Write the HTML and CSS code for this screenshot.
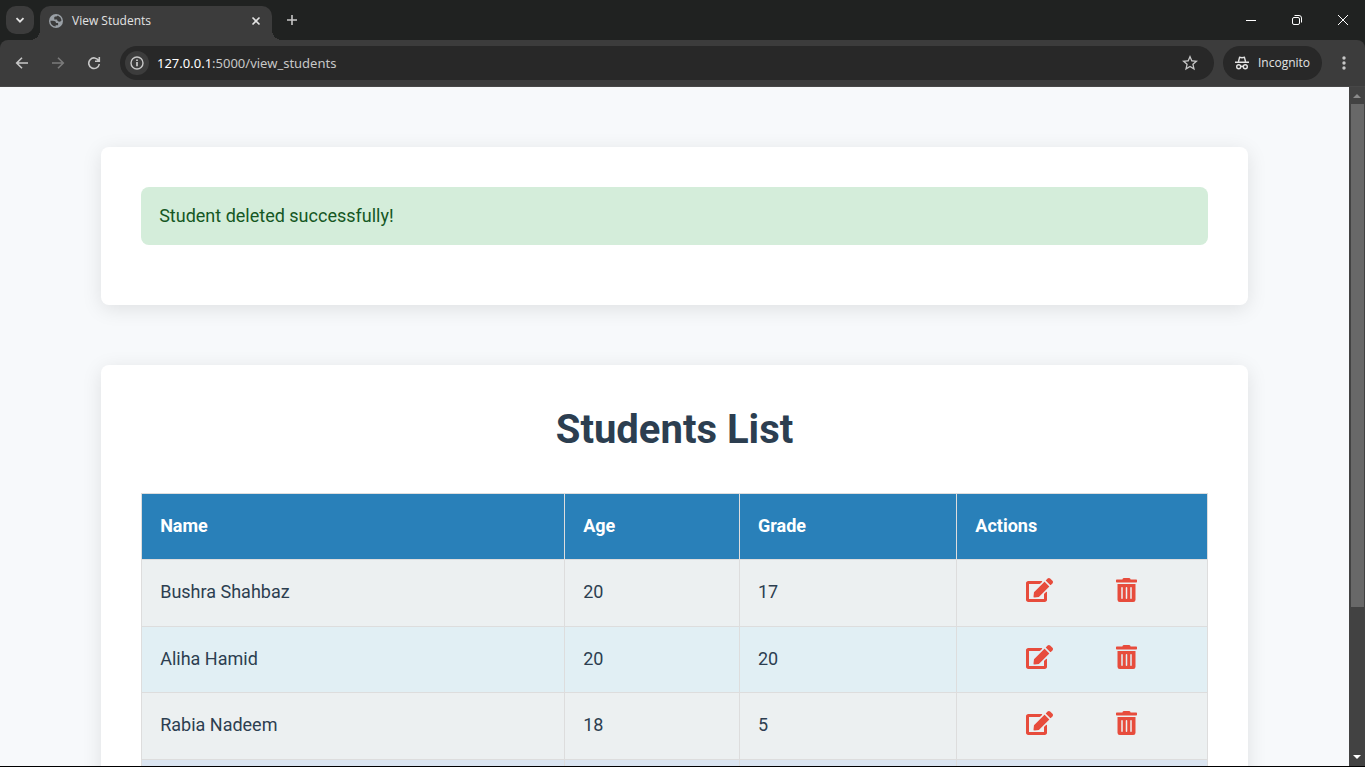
FILE: index.html
```html
<!DOCTYPE html>
<html lang="en">
<head>
<meta charset="utf-8">
<title>View Students</title>
<link rel="stylesheet" href="styles.css">
</head>
<body>
<svg class="defs" aria-hidden="true">
  <symbol id="edit" viewBox="0 0 576 512"><path d="M402.6 83.2l90.2 90.2c3.8 3.8 3.8 10 0 13.8L274.4 405.6l-92.8 10.3c-12.4 1.4-22.9-9.1-21.5-21.5l10.3-92.8L388.8 83.2c3.8-3.8 10-3.8 13.8 0zm162-22.9l-48.8-48.8c-15.2-15.2-39.9-15.2-55.2 0l-35.4 35.4c-3.8 3.8-3.8 10 0 13.8l90.2 90.2c3.8 3.8 10 3.8 13.8 0l35.4-35.4c15.2-15.3 15.2-40 0-55.2zM384 346.2V448H64V128h229.8c3.2 0 6.2-1.3 8.5-3.5l40-40c7.6-7.6 2.2-20.5-8.5-20.5H48C21.5 64 0 85.5 0 112v352c0 26.5 21.5 48 48 48h352c26.5 0 48-21.5 48-48V306.2c0-10.7-12.9-16-20.5-8.5l-40 40c-2.2 2.3-3.5 5.3-3.5 8.5z"/></symbol>
  <symbol id="trash" viewBox="0 0 448 512"><path d="M32 464a48 48 0 0 0 48 48h288a48 48 0 0 0 48-48V128H32zm272-256a16 16 0 0 1 32 0v224a16 16 0 0 1-32 0zm-96 0a16 16 0 0 1 32 0v224a16 16 0 0 1-32 0zm-96 0a16 16 0 0 1 32 0v224a16 16 0 0 1-32 0zM432 32H312l-9.4-18.7A24 24 0 0 0 281.1 0H166.800a23.720 23.720 0 0 0-21.400 13.300L136 32H16A16 16 0 0 0 0 48v32a16 16 0 0 0 16 16h416a16 16 0 0 0 16-16V48a16 16 0 0 0-16-16z"/></symbol>
</svg>
<div class="browser">
  <div class="tabstrip">
    <button class="tab-search" aria-label="Search tabs"><svg width="10" height="10" viewBox="0 0 10 10"><path class="line bright" d="M1.5 3.2L5 6.7l3.500-3.500" stroke-width="1.8"/></svg></button>
    <div class="tab">
      <svg class="favicon" width="14" height="14" viewBox="2 2 20 20"><circle cx="12" cy="12" r="10" fill="#9aa0a6"/><path fill="#3c3c3c" d="M4 11.500h3.500c2.800 0 4.500 1 4.500 3.500h3v3h-3.500v1.900A8 8 0 0 1 4 11.500zM15 4.600A8 8 0 0 1 19.900 11c-.5 1.200-1.500 2-2.900 2-2 0-3.500-1.300-3.500-3H9.500V7c0-.9 1-1.500 2.500-1.500h1c0-1 .8-1.500 2-.9z"/></svg>
      <span class="tab-title">View Students</span>
      <button class="tab-close" aria-label="Close tab"><svg width="10" height="10" viewBox="0 0 10 10"><path class="line bright" d="M1.500 1.500l7 7M8.500 1.500l-7 7" stroke-width="1.600"/></svg></button>
    </div>
    <button class="tab-new" aria-label="New tab"><svg width="12" height="12" viewBox="0 0 12 12"><path class="line" d="M6 1v10M1 6h10" stroke-width="1.600"/></svg></button>
    <div class="window-buttons">
      <button aria-label="Minimize"><svg width="10" height="10" viewBox="0 0 10 10"><path d="M0 5h10v1H0z" fill="#fff"/></svg></button>
      <button aria-label="Restore"><svg width="10" height="10" viewBox="0 0 10 10"><rect class="win" x=".5" y="2.500" width="7" height="7" rx="1.500"/><path class="win" d="M2.500 .5H7A2.500 2.500 0 0 1 9.500 3v4.500"/></svg></button>
      <button aria-label="Close"><svg width="10" height="10" viewBox="0 0 10 10"><path class="win" d="M0 0l10 10M10 0L0 10"/></svg></button>
    </div>
  </div>
  <div class="toolbar">
    <button class="nav" aria-label="Back"><svg width="14" height="14" viewBox="0 0 14 14"><path class="line" d="M13 7H2M7 1.700L1.700 7 7 12.300" stroke-width="1.600"/></svg></button>
    <button class="nav dim" aria-label="Forward" disabled><svg width="14" height="14" viewBox="0 0 14 14"><path class="line" d="M1 7h11M7 1.700L12.300 7 7 12.300" stroke-width="1.600"/></svg></button>
    <button class="nav" aria-label="Reload"><svg width="14" height="14" viewBox="0 0 14 14"><path class="line" d="M11.600 4.500A5.300 5.300 0 1 0 12.300 8M12.300 1v4.300H8" stroke-width="1.600"/></svg></button>
    <div class="omnibox">
      <button class="info" aria-label="View site information"><svg width="14" height="14" viewBox="0 0 14 14"><circle class="line" cx="7" cy="7" r="6" stroke-width="1.400"/><path d="M6.200 6h1.600v4.300H6.200zM6.200 3.500h1.600v1.600H6.200z" fill="#d5d5d5"/></svg></button>
      <div class="url" role="textbox" aria-label="Address"><span class="host">127.0.0.1</span>:5000/view_students</div>
      <button class="star" aria-label="Bookmark this tab"><svg width="16" height="16" viewBox="2 2 20 20"><path fill="#c7c7c7" d="M22 9.240l-7.190-.62L12 2 9.190 8.630 2 9.240l5.460 4.730L5.820 21 12 17.270 18.180 21l-1.630-7.030L22 9.240zM12 15.400l-3.760 2.270 1-4.280-3.320-2.880 4.380-.38L12 6.100l1.710 4.040 4.380.38-3.320 2.880 1 4.280L12 15.400z"/></svg></button>
    </div>
    <button class="incognito"><svg width="14" height="14" viewBox="0 0 14 14"><path class="line bright" d="M3.500 5.500L4.600 1.200 7 1.700l2.400-.5 1.100 4.300M0 6.300h14M5.700 10.700q1.300-.9 2.600 0" stroke-width="1.400"/><circle class="line bright" cx="3.700" cy="10.800" r="2" stroke-width="1.400"/><circle class="line bright" cx="10.300" cy="10.800" r="2" stroke-width="1.400"/></svg>Incognito</button>
    <button class="menu" aria-label="Menu"><svg width="4" height="14" viewBox="0 0 4 14"><g fill="#c7c7c7"><circle cx="2" cy="2" r="1.700"/><circle cx="2" cy="7" r="1.700"/><circle cx="2" cy="12" r="1.700"/></g></svg></button>
  </div>
  <div class="viewport">
    <main class="page">
      <section class="card">
        <div class="alert" role="status">Student deleted successfully!</div>
      </section>
      <section class="card">
        <h1>Students List</h1>
        <table>
          <colgroup><col class="c-name"><col class="c-age"><col class="c-grade"><col class="c-actions"></colgroup>
          <thead><tr><th>Name</th><th>Age</th><th>Grade</th><th>Actions</th></tr></thead>
          <tbody>
            <tr><td>Bushra Shahbaz</td><td>20</td><td>17</td><td><div class="actions"><a href="#" aria-label="Edit"><svg width="27" height="24"><use href="#edit"/></svg></a><a href="#" aria-label="Delete"><svg width="21" height="24"><use href="#trash"/></svg></a></div></td></tr>
            <tr class="even"><td>Aliha Hamid</td><td>20</td><td>20</td><td><div class="actions"><a href="#" aria-label="Edit"><svg width="27" height="24"><use href="#edit"/></svg></a><a href="#" aria-label="Delete"><svg width="21" height="24"><use href="#trash"/></svg></a></div></td></tr>
            <tr><td>Rabia Nadeem</td><td>18</td><td>5</td><td><div class="actions"><a href="#" aria-label="Edit"><svg width="27" height="24"><use href="#edit"/></svg></a><a href="#" aria-label="Delete"><svg width="21" height="24"><use href="#trash"/></svg></a></div></td></tr>
            <tr class="hovered"><td></td><td></td><td></td><td></td></tr>
          </tbody>
        </table>
      </section>
    </main>
    <div class="scrollbar" aria-hidden="true">
      <svg width="16" height="17" viewBox="0 0 16 17"><path d="M8 7l4 4H4z" fill="#8a8a8a"/></svg>
      <div class="track"><div class="thumb"></div></div>
      <svg width="16" height="17" viewBox="0 0 16 17"><path d="M8 10L4 6h8z" fill="#fff"/></svg>
    </div>
  </div>
</div>
</body>
</html>
```
FILE: styles.css
```css
* { box-sizing: border-box; }
body { margin: 0; font-family: Roboto, sans-serif; color: #2c3e50; }
.defs { display: none; }
button { border: 0; padding: 0; background: none; color: inherit; font: inherit; display: flex; align-items: center; justify-content: center; flex: none; }
svg { display: block; flex: none; }
.line { fill: none; stroke: #c7c7c7; }
.bright { stroke: #e3e3e3; }
.win { fill: none; stroke: #fff; }

.browser { height: 100vh; display: flex; flex-direction: column; overflow: hidden; background: #202221; border-bottom: 1px solid #000; font-size: 12px; }

/* Tab strip */
.tabstrip { display: flex; height: 40px; flex: none; padding-left: 6px; color: #e3e3e3; font-family: "Open Sans", sans-serif; }
.tab-search { width: 28px; height: 28px; margin-top: 6px; border-radius: 10px; background: #3c3c3c; }
.tab { position: relative; display: flex; align-items: center; width: 232px; height: 34px; margin: 6px 0 0 6px; padding: 0 8px 5px 9px; background: #3c3c3c; border-radius: 10px 10px 0 0; }
.tab::before, .tab::after { content: ""; position: absolute; bottom: 0; width: 10px; height: 10px; }
.tab::before { right: 100%; background: radial-gradient(circle at 0 0, transparent 10px, #3c3c3c 10px); }
.tab::after { left: 100%; background: radial-gradient(circle at 100% 0, transparent 10px, #3c3c3c 10px); }
.tab-title { flex: 1; padding-left: 9px; font-size: 12px; line-height: 16px; }
.tab-close { width: 16px; height: 16px; }
.tab-new { width: 28px; height: 28px; margin: 6px 0 0 6px; }
.window-buttons { display: flex; margin-left: auto; }
.window-buttons button { width: 46px; height: 40px; padding-left: 2px; }

/* Toolbar */
.toolbar { display: flex; align-items: center; flex: none; height: 47px; padding: 0 11px 1px 4px; background: #3c3c3c; border-bottom: 1px solid #474747; border-radius: 8px 8px 0 0; color: #e3e3e3; font-family: "Open Sans", sans-serif; }
.nav { width: 36px; height: 34px; }
.dim { opacity: .45; }
.omnibox { display: flex; align-items: center; flex: 1; height: 34px; margin: 0 9px 0 8px; padding: 0 12px 0 5px; border-radius: 17px; background: #282828; }
.info { width: 24px; height: 24px; border-radius: 12px; background: #3c3c3c; }
.url { flex: 1; padding-left: 8px; font-family: "Noto Sans", sans-serif; font-size: 13px; line-height: 20px; color: #c7c7c7; }
.host { color: #fff; }
.star { width: 24px; height: 24px; }
.incognito { gap: 9px; width: 99px; height: 34px; border-radius: 17px; background: #282828; }
.menu { width: 20px; height: 24px; margin-left: 12px; }

/* Document */
.viewport { display: flex; flex: 1; min-height: 0; background: #f7f9fb; }
.page { flex: 1; overflow: hidden; padding-top: 60px; font-size: 18px; line-height: 28px; }
.card { width: 85%; margin: 0 auto 60px; padding: 40px; background: #fff; border-radius: 8px; box-shadow: 0 4px 20px rgba(0, 0, 0, .1); }
.alert { margin-bottom: 20px; padding: 15px 18px; border-radius: 8px; background: #d4edda; color: #155724; }
h1 { margin: 0 0 38px; font-size: 40px; line-height: 50px; font-weight: 700; text-align: center; }
table { width: 100%; table-layout: fixed; border-collapse: collapse; }
.c-name { width: 39.7%; }
.c-age { width: 16.4%; }
.c-grade { width: 20.4%; }
.c-actions { width: 23.5%; }
th, td { height: 67px; padding: 0 18px 2px; border: 1px solid #ddd; text-align: left; }
th { height: 66px; background: #2980b9; color: #fff; font-weight: 700; }
td { background: #ecf0f1; }
.even td { height: 66px; background: #e1eff4; }
.hovered td { background: #dbe5f1; }
.actions { display: flex; justify-content: center; gap: 63px; padding: 0 2px 4px 0; }
.actions a { color: #e74c3c; }
.actions svg { fill: currentColor; }

/* Scrollbar */
.scrollbar { display: flex; flex-direction: column; flex: none; width: 16px; background: #424242; }
.track { flex: 1; padding: 0 1px 0 2px; }
.thumb { height: 78%; background: #686868; }
```
